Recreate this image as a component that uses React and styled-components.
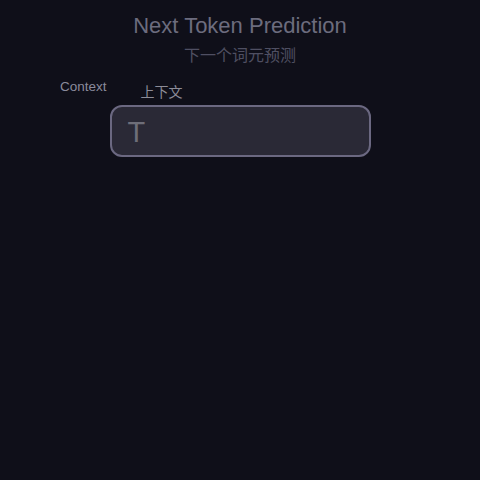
import React from 'react';
import styled, { createGlobalStyle } from 'styled-components';

const GlobalStyle = createGlobalStyle`
  html, body {
    margin: 0;
    padding: 0;
    background: #0f0f19;
  }
  body {
    font-family: "Liberation Sans", Arial, "Noto Sans CJK SC", sans-serif;
  }
`;

const Page = styled.div`
  width: 480px;
  height: 480px;
  background: #0f0f19;
  display: flex;
  flex-direction: column;
  align-items: center;
  box-sizing: border-box;
  padding-top: 13px;
`;

const Title = styled.h1`
  margin: 0;
  font-size: 22px;
  font-weight: 400;
  line-height: 26px;
  color: #6c6c7e;
`;

const Subtitle = styled.div`
  margin-top: 5px;
  font-size: 16px;
  line-height: 20px;
  color: #4f4f62;
  font-family: "Noto Sans CJK SC", sans-serif;
`;

const Section = styled.div`
  align-self: stretch;
  display: flex;
  padding-left: 60px;
  margin-top: 12px;
`;

const EnLabel = styled.div`
  font-size: 13.5px;
  line-height: 16px;
  color: #8a8a9c;
  margin-top: 3px;
`;

const Field = styled.div`
  display: flex;
  flex-direction: column;
  margin-left: 3px;
  margin-top: 6px;
`;

const CnLabel = styled.div`
  font-size: 14px;
  line-height: 18px;
  color: #8c8c98;
  margin-left: 31px;
  font-family: "Noto Sans CJK SC", sans-serif;
`;

const InputBox = styled.div`
  width: 261px;
  height: 52px;
  box-sizing: border-box;
  border: 2px solid #6b6881;
  border-radius: 12px;
  background: #2a2936;
  display: flex;
  align-items: center;
  padding-left: 16px;
  padding-top: 2px;
  margin-top: 5px;
`;

const Token = styled.span`
  font-size: 29px;
  line-height: 30px;
  color: #6e6e79;
  font-weight: 300;
`;

export default function App() {
  return (
    <>
      <GlobalStyle />
      <Page>
        <Title>Next Token Prediction</Title>
        <Subtitle>下一个词元预测</Subtitle>
        <Section>
          <EnLabel>Context</EnLabel>
          <Field>
            <CnLabel>上下文</CnLabel>
            <InputBox>
              <Token>T</Token>
            </InputBox>
          </Field>
        </Section>
      </Page>
    </>
  );
}
